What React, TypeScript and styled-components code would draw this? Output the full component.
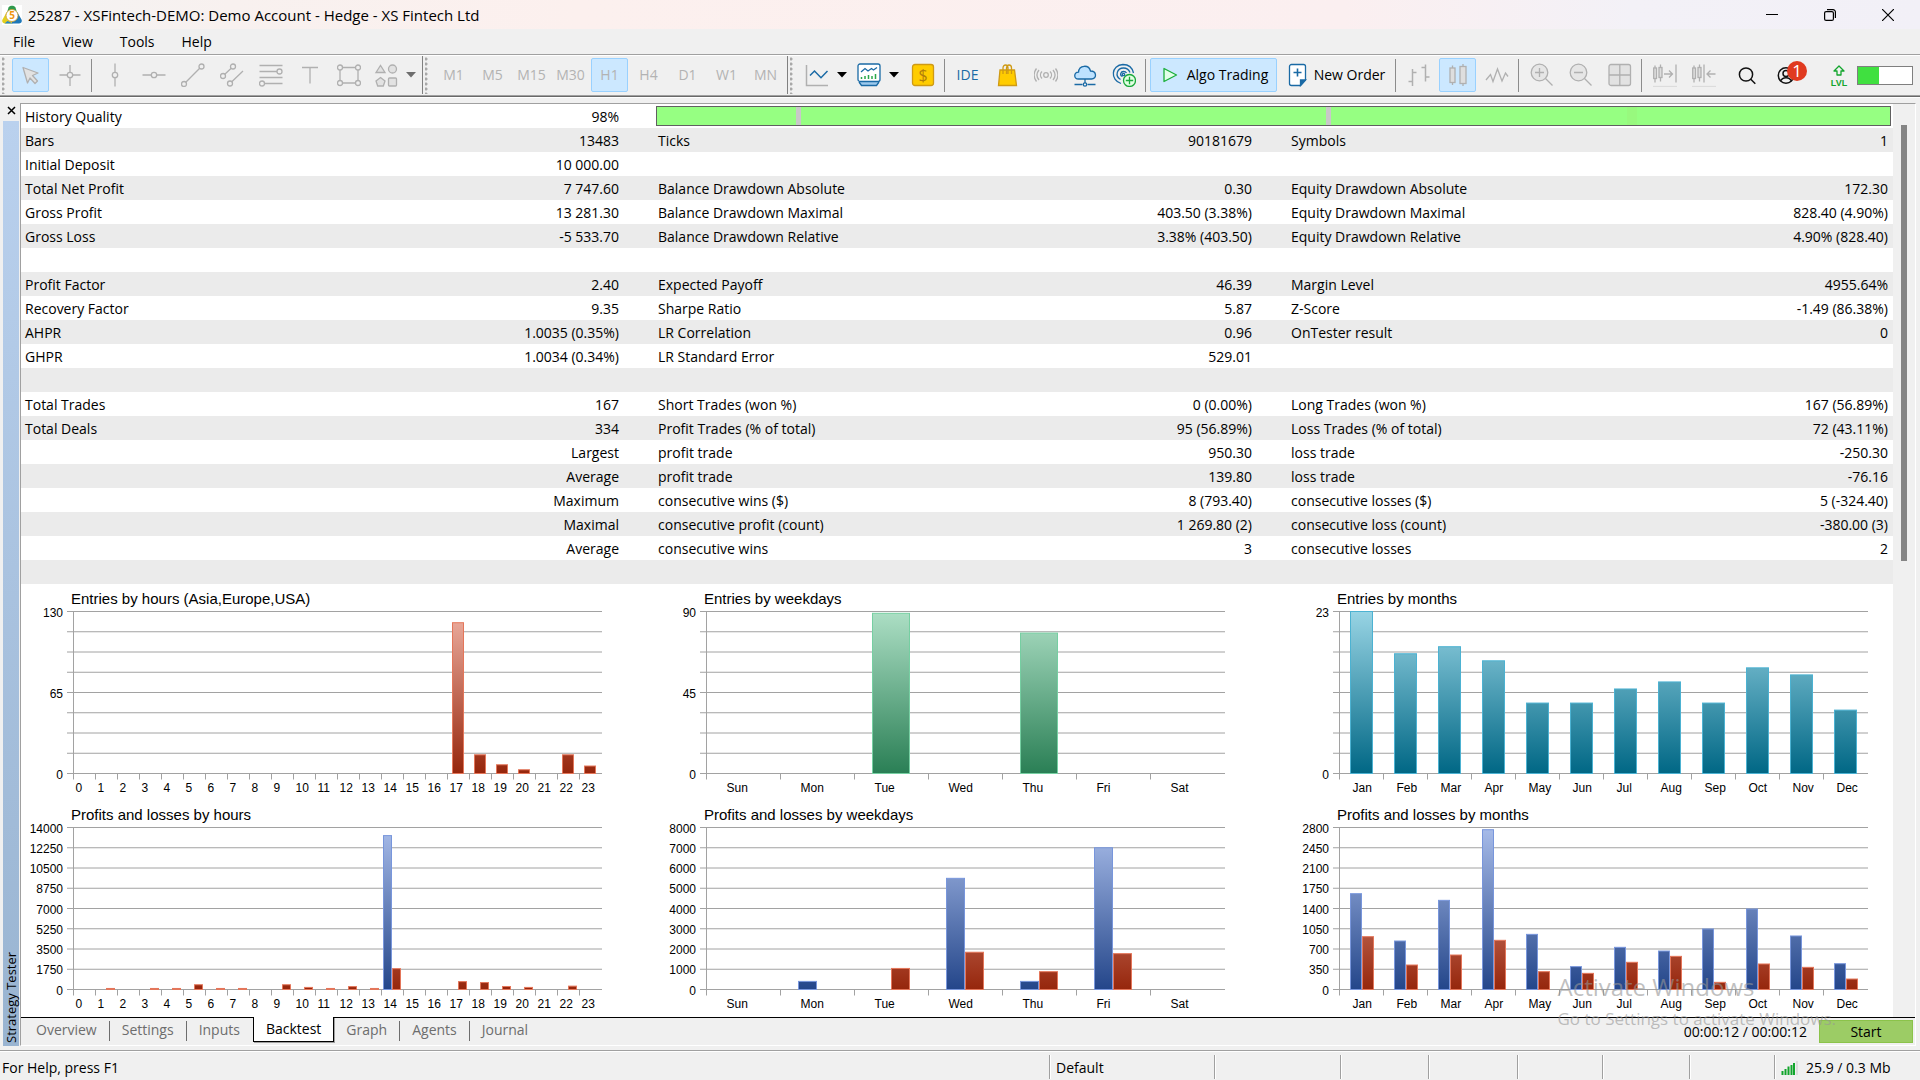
import React, { useState } from "react";
import styled, { createGlobalStyle, css } from "styled-components";

const UI_FONT = `"Open Sans", "Noto Sans", sans-serif`;
const CHART_FONT = `"Liberation Sans", Arial, sans-serif`;

const GlobalStyle = createGlobalStyle`
  *, *::before, *::after { box-sizing: border-box; }
  body {
    margin: 0;
    background: #f0f0f0;
    color: #000;
    font: 14px/20px ${UI_FONT};
  }
  button {
    margin: 0;
    padding: 0;
    border: 0;
    background: none;
    color: inherit;
    font: inherit;
  }
  svg { display: block; }
`;

/* ---------- window frame ---------- */

const Window = styled.div`
  display: flex;
  flex-direction: column;
  min-height: 100vh;
  overflow: hidden;
`;

const TitleBar = styled.header`
  display: flex;
  align-items: center;
  height: 29px;
  padding: 0 3px 0 2px;
  background: linear-gradient(90deg, #f3f3f3 0%, #f8f1ef 12%, #fcf0ee 30%, #fbeff0 70%, #f3f1f7 85%, #f2f0f7 100%);
`;

const WindowTitle = styled.h1`
  flex: 1;
  margin: 0 0 0 6px;
  font-size: 15px;
  font-weight: 400;
`;

const WindowButton = styled.button`
  display: grid;
  place-items: center;
  width: 58px;
  height: 28px;
`;

const MenuBar = styled.nav`
  display: flex;
  gap: 1px;
  height: 25px;
`;

const MenuItem = styled.button`
  padding: 0 13px;
`;

/* ---------- toolbar ---------- */

const Toolbar = styled.div`
  display: flex;
  align-items: stretch;
  height: 44px;
  border-top: 1px solid #a0a0a0;
  border-bottom: 1px solid #fff;
  box-shadow: inset 0 1px #fff, inset 0 -1px #696969, inset 0 -2px #a0a0a0;
  padding: 1px 7px 3px 0;
`;

const ToolGroup = styled.div<{ $end?: number }>`
  display: flex;
  align-items: center;
  gap: 2px;
  ${(p) =>
    p.$end !== undefined &&
    css`
      padding-right: ${p.$end}px;
      border-right: 1px solid #808080;
    `}
`;

const Grip = styled.span`
  align-self: stretch;
  width: 4px;
  margin: 1px 4px 0 2px;
  background: radial-gradient(circle at 1px 2px, #a8a8a8 1px, transparent 2px) 0 0 / 4px 5px repeat-y;
`;

const Divider = styled.span`
  width: 1px;
  height: 33px;
  margin: 0 2px 0 1px;
  background: #8c8c8c;
`;

const ToolButton = styled.button<{ $active?: boolean; $width?: number }>`
  display: flex;
  align-items: center;
  justify-content: center;
  gap: 4px;
  flex: none;
  width: ${(p) => p.$width ?? 37}px;
  height: 34px;
  border: 1px solid ${(p) => (p.$active ? "#99d1ff" : "transparent")};
  border-radius: 2px;
  background: ${(p) => (p.$active ? "#cce8ff" : "transparent")};
  white-space: nowrap;
`;

const PeriodButton = styled(ToolButton)`
  color: #b3b3b3;
`;

const IdeButton = styled(ToolButton)`
  color: #1a6aa5;
`;

const MenuArrow = styled.button<{ $muted?: boolean }>`
  display: grid;
  place-items: center;
  width: 11px;
  height: 34px;
  color: ${(p) => (p.$muted ? "#6d6d6d" : "#000")};
`;

const SplitTool = styled.div<{ $last?: boolean }>`
  display: flex;
  gap: 2px;
  margin-right: ${(p) => (p.$last ? 0 : 3)}px;
`;

const AccountTools = styled(ToolGroup)`
  margin-left: auto;
`;

const AccountButton = styled(ToolButton)`
  position: relative;
  margin-right: 14px;
`;

const Badge = styled.span`
  position: absolute;
  top: 2px;
  right: -4px;
  width: 20px;
  height: 20px;
  border-radius: 50%;
  background: #e03a20;
  color: #fff;
  font-size: 17px;
  line-height: 20px;
  text-align: center;
`;

const LevelMeter = styled.div`
  width: 56px;
  height: 19px;
  margin-left: -2px;
  border: 1px solid #7f7f7f;
  background: #fff;
`;

const LevelFill = styled.div`
  width: 38%;
  height: 100%;
  background: #40e040;
`;

/* ---------- tester panel ---------- */

const Workspace = styled.div`
  display: flex;
  margin: 5px 4px 0 0;
`;

const SideBar = styled.aside`
  display: flex;
  flex-direction: column;
  width: 20px;
  padding: 0 1px 0 3px;
`;

const CloseButton = styled.button`
  display: grid;
  place-items: center;
  height: 14px;
  margin-bottom: 4px;
`;

const SideCaption = styled.div`
  flex: 1;
  display: flex;
  align-items: center;
  padding: 3px 0;
  background: linear-gradient(#99b4d1, #bad1ee);
  font-size: 13px;
  line-height: 16px;
  writing-mode: vertical-rl;
  transform: rotate(180deg);
`;

const Panel = styled.main`
  flex: 1;
  min-width: 0;
  border: 1px solid #a0a0a0;
  border-right-color: #fff;
  border-bottom-color: #fff;
`;

const ReportArea = styled.div`
  display: flex;
`;

const Report = styled.div`
  flex: 1;
  min-width: 0;
  padding-bottom: 1px;
  background: #fff;
`;

const ScrollTrack = styled.div`
  width: 22px;
  padding: 21px 8px;
`;

const ScrollThumb = styled.div`
  width: 6px;
  height: 436px;
  background: #858585;
`;

const StatsBody = styled.div`
  padding: 0 5px 0 4px;
  background: repeating-linear-gradient(#fff 0 24px, #ebebeb 24px 48px);
`;

const StatsTable = styled.table`
  width: 100%;
  border-collapse: collapse;
  table-layout: fixed;
`;

const GapCol = styled.col`
  width: 36px;
`;

const Cell = styled.td<{ $right?: boolean }>`
  height: 24px;
  padding: 2px ${(p) => (p.$right ? 3 : 0)}px 0 0;
  line-height: 20px;
  text-align: ${(p) => (p.$right ? "right" : "left")};
  white-space: nowrap;
  &:last-child { padding-right: 0; }
`;

const HeadCell = styled(Cell).attrs({ as: "th", scope: "row" })`
  font-weight: 400;
`;

const BarCell = styled.td`
  height: 24px;
  padding: 0;
`;

const QualityBar = styled.div`
  display: flex;
  height: 20px;
  margin: 0 -3px 0 -2px;
  border: 1px solid #606060;
  background: #96ff82;
`;

const QualityPart = styled.span<{ $color?: string }>`
  background: ${(p) => p.$color ?? "transparent"};
`;

const Charts = styled.div`
  display: grid;
  grid-template-columns: repeat(3, 1fr);
  column-gap: 27px;
`;

const ChartSvg = styled.svg`
  width: 100%;
  height: auto;
  font-family: ${CHART_FONT};
`;

const TabStrip = styled.div`
  display: flex;
  height: 28px;
  border-top: 1px solid #000;
`;

const Tabs = styled.div`
  display: flex;
  align-items: flex-start;
  padding-left: 3px;
`;

const Tab = styled.button<{ $active: boolean; $divided: boolean }>`
  height: 24px;
  padding: 0 12px;
  color: #6d6d6d;
  ${(p) =>
    p.$active
      ? css`
          margin-top: -1px;
          height: 25px;
          border: solid #000;
          border-width: 0 1px 1px;
          background: #fff;
          color: #000;
          box-shadow: 1px 1px #a0a0a0;
        `
      : css`
          border: solid transparent;
          border-width: 0 1px 0 0;
          background: ${p.$divided ? "linear-gradient(#6d6d6d, #6d6d6d) right 0 top 3px / 1px 20px no-repeat border-box border-box" : "none"};
        `}
`;

const RunInfo = styled.div`
  display: flex;
  align-items: flex-start;
  gap: 12px;
  margin-left: auto;
  padding: 2px 2px 0 0;
`;

const StartButton = styled.button`
  width: 94px;
  height: 23px;
  border: 1px solid #8bc34a;
  background: #9ccc65;
`;

const RunTime = styled.span`
  padding-top: 2px;
`;

const StatusBar = styled.footer`
  display: grid;
  grid-template-columns: 1fr 165px 126px 88px 89px 85px 87px 85px 146px;
  flex: 1;
  margin-top: 4px;
  padding: 4px 0 1px;
  border-top: 1px solid #a0a0a0;
  box-shadow: inset 0 1px #fff;
`;

const StatusCell = styled.div`
  display: flex;
  align-items: center;
  gap: 8px;
  padding: 2px 0 0 2px;
  & + & {
    padding-left: 6px;
    border-left: 1px solid #a0a0a0;
    box-shadow: inset 1px 0 #fff;
  }
`;

const Watermark = styled.div`
  position: absolute;
  right: 84px;
  bottom: 50px;
  color: rgba(150, 150, 150, 0.6);
  font-size: 17px;
  line-height: 22px;
  pointer-events: none;
`;

const WatermarkTitle = styled.div`
  margin-bottom: 4px;
  font-size: 24px;
  line-height: 34px;
`;

/* ---------- icons ---------- */

type IconProps = { children: React.ReactNode; color?: string; size?: number; weight?: number };

const Icon = ({ children, color = "#b0b0b0", size = 24, weight = 1.3 }: IconProps) => (
  <svg width={size} height={size} viewBox="0 0 24 24" fill="none" stroke={color} strokeWidth={weight} aria-hidden="true">
    {children}
  </svg>
);

const ArrowGlyph = () => (
  <svg width="10" height="6" viewBox="0 0 10 6" aria-hidden="true">
    <path d="M0 0h10L5 5.5z" fill="currentColor" />
  </svg>
);

const Logo = () => (
  <svg width="20" height="20" viewBox="0 0 20 20" aria-hidden="true">
    <rect width="20" height="20" fill="#fff" />
    <path d="M4.500 9 6.500 2.600C7.400.2 12.600.2 13.500 2.600L15.500 9z" fill="#2f9a4d" />
    <path d="M4.800 7 .5 14.500C-.5 17 1 18.500 3 18.500h7V10z" fill="#e3cf1c" />
    <path d="M15.200 7l4.300 7.500c1 2.500-.5 4-2.500 4h-7V10z" fill="#1f78b8" />
    <path d="M2.500 18.500l3-2.500 5.500 2.500z" fill="#2a86c8" />
    <circle cx="10" cy="10.500" r="6" fill="#fff" stroke="#cfa13c" strokeWidth=".9" />
    <text x="10" y="14.200" textAnchor="middle" fontSize="10" fontWeight="700" fill="#f0960f" fontFamily={UI_FONT}>5</text>
  </svg>
);

const CursorIcon = () => (
  <Icon><path d="M4 4.500 19 10l-5.500 2.500 5 5.500-2.500 2.500-5-5.500-2.500 5z" fill="#e2e2e2" strokeLinejoin="round" /></Icon>
);
const CrosshairIcon = () => (
  <Icon><circle cx="12" cy="12" r="2.700" /><path d="M1.500 12H9M15 12h7.500M12 2v7M12 15v8" /></Icon>
);
const VLineIcon = () => (
  <Icon><circle cx="12" cy="12" r="2.700" /><path d="M12 .5V9M12 15v8.500" /></Icon>
);
const HLineIcon = () => (
  <Icon><circle cx="12" cy="12" r="2.700" /><path d="M.5 12H9M15 12h8.500" /></Icon>
);
const TrendIcon = () => (
  <Icon><circle cx="3" cy="21" r="2.500" /><circle cx="20.500" cy="3.500" r="2.500" /><path d="M4.800 19.200 18.700 5.300" /></Icon>
);
const ChannelIcon = () => (
  <Icon>
    <circle cx="3" cy="13" r="2.500" /><circle cx="13" cy="3.500" r="2.500" /><circle cx="10" cy="20.500" r="2.500" />
    <path d="M4.800 11.200 11.200 5.300M11.800 18.700 23 8" />
  </Icon>
);
const FiboIcon = () => (
  <Icon>
    <path d="M.5 2.500h23M.5 8.500H18M.5 14.500h23M6 20.500h17.500" />
    <circle cx="20.500" cy="8.500" r="2.500" /><circle cx="3" cy="20.500" r="2.500" />
  </Icon>
);
const LabelIcon = () => (
  <Icon><path d="M4 4.500h16M12 4.500v16" /></Icon>
);
const RectIcon = () => (
  <Icon>
    <circle cx="3" cy="4.500" r="2.500" /><circle cx="21" cy="4.500" r="2.500" />
    <circle cx="3" cy="20" r="2.500" /><circle cx="21" cy="20" r="2.500" />
    <path d="M5.500 4.500h13M5.500 20h13M3 7v10.500M21 7v10.500" />
  </Icon>
);
const ShapesIcon = () => (
  <Icon>
    <path d="M2 9.500 6.500 2.500 11 9.500z" fill="#e2e2e2" />
    <circle cx="18.500" cy="6" r="4" fill="#e2e2e2" />
    <path d="M6.500 14.500l4.500 3.500-1.700 5H3.700L2 18z" fill="#e2e2e2" />
    <rect x="14.500" y="15" width="8" height="8" rx="1" fill="#e2e2e2" />
  </Icon>
);
const LineChartIcon = () => (
  <Icon weight={1.5}><path d="M1.500 2v20.500H23" /><path d="M5 12.500 9.500 8l6.500 6.700L22.500 8" stroke="#1a6aa5" /></Icon>
);
const IndicatorIcon = () => (
  <Icon color="#1a6aa5">
    <path d="M2 19l2.500 3.500h15L22 19" fill="#9cc9ec" />
    <rect x="1" y="1" width="22" height="17.500" rx="2" fill="#fff" />
    <path d="M4 9l4-3.500 3 2.500 3.500-2.500 2 1.500L20 4.500" />
    <path d="M4.500 16v-2M8 16v-3M11.500 16v-4M15 16v-3M18.500 16v-5" stroke="#2aa84a" strokeWidth="1.500" />
  </Icon>
);
const DollarIcon = () => (
  <Icon color="#cf9a14">
    <rect x="1.500" y="1.500" width="21" height="21" rx="2.500" fill="#ffcc00" />
    <text x="12" y="18" textAnchor="middle" fontSize="16" fill="#b07d0c" stroke="none" fontFamily={UI_FONT}>$</text>
  </Icon>
);
const BagIcon = () => (
  <Icon color="#cf9a14">
    <path d="M5 7h14.500l2 15.500h-18z" fill="#ffcc00" />
    <path d="M8 11V5c0-4 5-4 5 0v6M11.500 11V5c0-4 5-4 5 0v6" />
  </Icon>
);
const SignalIcon = () => (
  <Icon>
    <circle cx="12" cy="12" r="2.300" />
    <path d="M8 8.500c-2 2-2 5 0 7M16 8.500c2 2 2 5 0 7M5 7c-2.500 3-2.500 7 0 10M19 7c2.500 3 2.500 7 0 10M2.500 5.500c-3 4-3 9 0 13M21.500 5.500c3 4 3 9 0 13" />
  </Icon>
);
const CloudIcon = () => (
  <Icon color="#1a6aa5">
    <path d="M5.500 16C.5 16 .5 9.500 5.500 9.200 6 1.500 16 1.500 17.500 8c6.500 0 6.500 8 1 8z" fill="#bde2ff" />
    <path d="M12 16v4M1.500 21.500h8M14.500 21.500h8" /><circle cx="12" cy="21.500" r="1.700" />
  </Icon>
);
const VpsIcon = () => (
  <Icon color="#1a6aa5">
    <path d="M9 20.500C-2 17-1 2 11 1.500c6 0 9.500 4 10.500 8.500M8.500 16.500C2.500 13 5 5 11.500 5c3.500 0 5.500 2 6.500 4.500M10.500 13.500C7 12 9 8.500 11.500 8.500c1.500 0 2.500.5 3 1.500" />
    <circle cx="11.500" cy="11.500" r="1.200" />
    <circle cx="17.500" cy="17.500" r="6" fill="#e2ffe2" stroke="#1aa83a" /><path d="M13.800 17.500h7.400M17.500 13.800v7.400" stroke="#1aa83a" />
  </Icon>
);
const PlayIcon = () => (
  <Icon color="#1aae3a"><path d="M5 5.500v13l12.500-6.500z" fill="#e2ffe8" strokeLinejoin="round" /></Icon>
);
const NewOrderIcon = () => (
  <Icon color="#1a6aa5">
    <path d="M5.500 1.500h12a2 2 0 0 1 2 2V17l-5 5.500h-9a2 2 0 0 1-2-2v-17a2 2 0 0 1 2-2z" fill="#fff" />
    <path d="M14.500 22.500V17h5z" fill="#1a6aa5" /><path d="M7.500 9.500h8M11.500 5.500v8" strokeWidth="1.600" />
  </Icon>
);
const BarsIcon = () => (
  <Icon><path d="M5.500 6v17M1.500 18.500h4M5.500 9.500h4M18.500 1.500v17M14.500 4.500h4M18.500 14h4" strokeWidth="1.500" /></Icon>
);
const CandlesIcon = () => (
  <Icon>
    <path d="M6.500 2.500v19.500M17 1v22" />
    <rect x="4" y="5" width="5" height="14.500" fill="#dedede" /><rect x="14" y="3.500" width="6" height="17" fill="#dedede" />
  </Icon>
);
const ZigzagIcon = () => (
  <Icon><path d="M1 17l4.500-5.500L8 18.500 12.500 6l4.500 12 3.500-8 2.500 3.500" /></Icon>
);
const ZoomIcon = ({ plus }: { plus?: boolean }) => (
  <Icon>
    <circle cx="9.500" cy="9.500" r="8.300" fill="#e6e6e6" />
    <path d={`M15.500 15.500l7 7M5 9.500h9${plus ? "M9.500 5v9" : ""}`} />
  </Icon>
);
const TileIcon = () => (
  <Icon><rect x="1" y="1.500" width="21.500" height="21" rx="2" fill="#e2e2e2" /><path d="M1 12h21.500M11.800 1.500v21" /></Icon>
);
const ShiftIcon = ({ back }: { back?: boolean }) => (
  <Icon>
    <path d="M2 2.500v17M7.500 1.500v17" />
    <rect x=".7" y="5" width="2.800" height="10.500" fill="#dedede" /><rect x="6" y="4.500" width="3" height="10" fill="#dedede" />
    <path d={back ? "M12 1.500v18M23.500 11h-8.500M18.500 7.500 15 11l3.500 3.500" : "M23 1.500v18M11 11h8.500M16 7.500l3.500 3.500-3.500 3.500"} />
    <path d="M0 23.500h24" stroke="#dcdcdc" />
  </Icon>
);
const SearchIcon = () => (
  <Icon color="#111" weight={1.5}><circle cx="11" cy="11.500" r="6.600" /><path d="M15.800 16.300l4.500 4.500" /></Icon>
);
const AccountIcon = () => (
  <Icon color="#111" weight={1.5}>
    <circle cx="12" cy="12.500" r="7.700" /><circle cx="12" cy="10.500" r="3" /><path d="M6.500 18c2-4.500 9-4.500 11 0" />
  </Icon>
);
const LevelIcon = () => (
  <Icon color="#12a52c">
    <path d="M12 3 17 8h-3v4h-4V8H7z" strokeLinejoin="round" />
    <text x="12" y="22.500" textAnchor="middle" fontSize="9" fontWeight="700" fill="#12a52c" stroke="none" fontFamily={CHART_FONT}>LVL</text>
  </Icon>
);
const TrafficIcon = () => (
  <svg width="17" height="14" viewBox="0 0 17 14" aria-hidden="true">
    <path d="M1.500 14v-4M4.500 14V8M7.500 14V5.500M10.500 14V4M13 14V2" stroke="#12a52c" strokeWidth="2" />
    <path d="M16 14V0" stroke="#dcdcdc" strokeWidth="2" />
  </svg>
);

/* ---------- statistics ---------- */

type Pair = [string, string];
type StatRow = [Pair, Pair, Pair];

const none: Pair = ["", ""];
const ROWS: StatRow[] = [
  [["Bars", "13483"], ["Ticks", "90181679"], ["Symbols", "1"]],
  [["Initial Deposit", "10 000.00"], none, none],
  [["Total Net Profit", "7 747.60"], ["Balance Drawdown Absolute", "0.30"], ["Equity Drawdown Absolute", "172.30"]],
  [["Gross Profit", "13 281.30"], ["Balance Drawdown Maximal", "403.50 (3.38%)"], ["Equity Drawdown Maximal", "828.40 (4.90%)"]],
  [["Gross Loss", "-5 533.70"], ["Balance Drawdown Relative", "3.38% (403.50)"], ["Equity Drawdown Relative", "4.90% (828.40)"]],
  [none, none, none],
  [["Profit Factor", "2.40"], ["Expected Payoff", "46.39"], ["Margin Level", "4955.64%"]],
  [["Recovery Factor", "9.35"], ["Sharpe Ratio", "5.87"], ["Z-Score", "-1.49 (86.38%)"]],
  [["AHPR", "1.0035 (0.35%)"], ["LR Correlation", "0.96"], ["OnTester result", "0"]],
  [["GHPR", "1.0034 (0.34%)"], ["LR Standard Error", "529.01"], none],
  [none, none, none],
  [["Total Trades", "167"], ["Short Trades (won %)", "0 (0.00%)"], ["Long Trades (won %)", "167 (56.89%)"]],
  [["Total Deals", "334"], ["Profit Trades (% of total)", "95 (56.89%)"], ["Loss Trades (% of total)", "72 (43.11%)"]],
  [["", "Largest"], ["profit trade", "950.30"], ["loss trade", "-250.30"]],
  [["", "Average"], ["profit trade", "139.80"], ["loss trade", "-76.16"]],
  [["", "Maximum"], ["consecutive wins ($)", "8 (793.40)"], ["consecutive losses ($)", "5 (-324.40)"]],
  [["", "Maximal"], ["consecutive profit (count)", "1 269.80 (2)"], ["consecutive loss (count)", "-380.00 (3)"]],
  [["", "Average"], ["consecutive wins", "3"], ["consecutive losses", "2"]],
  [none, none, none],
];

const QUALITY: { grow: number; width: number; color?: string }[] = [
  { grow: 139, width: 0 },
  { grow: 0, width: 5, color: "#c8c8c8" },
  { grow: 525, width: 0 },
  { grow: 0, width: 5, color: "#c8c8c8" },
  { grow: 296, width: 0 },
  { grow: 0, width: 10, color: "#98f97e" },
  { grow: 253, width: 0 },
];

const Statistics = () => (
  <StatsBody>
    <StatsTable>
      <colgroup>
        <col /><col /><GapCol /><col /><col /><GapCol /><col /><col />
      </colgroup>
      <tbody>
        <tr>
          <HeadCell>History Quality</HeadCell>
          <Cell $right>98%</Cell>
          <Cell />
          <BarCell colSpan={5}>
            <QualityBar>
              {QUALITY.map((q, i) => (
                <QualityPart key={i} $color={q.color} style={{ flex: `${q.grow} 0 ${q.width}px` }} />
              ))}
            </QualityBar>
          </BarCell>
        </tr>
        {ROWS.map((row, r) => (
          <tr key={r}>
            {row.map(([label, value], c) => (
              <React.Fragment key={c}>
                {c > 0 && <Cell />}
                {label ? <HeadCell>{label}</HeadCell> : <Cell />}
                <Cell $right>{value}</Cell>
              </React.Fragment>
            ))}
          </tr>
        ))}
      </tbody>
    </StatsTable>
  </StatsBody>
);

/* ---------- charts ---------- */

const PALETTE = {
  red: { top: "#eeb0a2", bottom: "#96260c", edge: "#e4765a" },
  blue: { top: "#a8bce9", bottom: "#24468a", edge: "#7896dc" },
  green: { top: "#addfc5", bottom: "#2a7f55", edge: "#76cfa2" },
  teal: { top: "#98d4e4", bottom: "#006785", edge: "#4cb2d2" },
};
type Hue = keyof typeof PALETTE;

type Series = { hue: Hue; values: number[]; offset: number; width: number };
type ChartData = {
  id: string;
  title: string;
  max: number;
  yTicks: number[];
  labels: string[];
  slot: number;
  labelOffset: number;
  series: Series[];
};

const HOURS = Array.from({ length: 24 }, (_, i) => String(i));
const DAYS = ["Sun", "Mon", "Tue", "Wed", "Thu", "Fri", "Sat"];
const MONTHS = ["Jan", "Feb", "Mar", "Apr", "May", "Jun", "Jul", "Aug", "Sep", "Oct", "Nov", "Dec"];

const steps = (max: number, count: number) => Array.from({ length: count + 1 }, (_, i) => (max / count) * i);
const zeros = (n: number) => Array<number>(n).fill(0);

const CHARTS: ChartData[] = [
  {
    id: "eh", title: "Entries by hours (Asia,Europe,USA)", max: 130, yTicks: steps(130, 2), labels: HOURS, slot: 22, labelOffset: 2,
    series: [{ hue: "red", offset: 5, width: 11, values: [...zeros(17), 121, 15, 7, 3, 0, 15, 6] }],
  },
  {
    id: "ew", title: "Entries by weekdays", max: 90, yTicks: steps(90, 2), labels: DAYS, slot: 74, labelOffset: 20,
    series: [{ hue: "green", offset: 18, width: 37, values: [0, 0, 89, 0, 78, 0, 0] }],
  },
  {
    id: "em", title: "Entries by months", max: 23, yTicks: [0, 23], labels: MONTHS, slot: 44, labelOffset: 13,
    series: [{ hue: "teal", offset: 11, width: 22, values: [23, 17, 18, 16, 10, 10, 12, 13, 10, 15, 14, 9] }],
  },
  {
    id: "ph", title: "Profits and losses by hours", max: 14000, yTicks: steps(14000, 8), labels: HOURS, slot: 22, labelOffset: 2,
    series: [
      { hue: "blue", offset: 2, width: 8, values: [...zeros(14), 13300, ...zeros(9)] },
      { hue: "red", offset: 11, width: 8, values: [0, 90, 0, 90, 90, 410, 90, 90, 0, 410, 180, 90, 250, 90, 1800, 0, 0, 680, 600, 260, 180, 0, 290, 0] },
    ],
  },
  {
    id: "pw", title: "Profits and losses by weekdays", max: 8000, yTicks: steps(8000, 8), labels: DAYS, slot: 74, labelOffset: 20,
    series: [
      { hue: "blue", offset: 18, width: 18, values: [0, 400, 0, 5490, 400, 7000, 0] },
      { hue: "red", offset: 37, width: 18, values: [0, 0, 1040, 1840, 880, 1770, 0] },
    ],
  },
  {
    id: "pm", title: "Profits and losses by months", max: 2800, yTicks: steps(2800, 8), labels: MONTHS, slot: 44, labelOffset: 13,
    series: [
      { hue: "blue", offset: 11, width: 11, values: [1656, 838, 1541, 2762, 953, 395, 729, 665, 1046, 1391, 925, 446] },
      { hue: "red", offset: 23, width: 11, values: [913, 423, 596, 850, 308, 279, 470, 573, 124, 441, 383, 181] },
    ],
  },
];

const AXIS_X = 52.5;
const TOP = 27.5;
const BOTTOM = 189.5;

const Chart = ({ data }: { data: ChartData }) => {
  const y = (v: number) => BOTTOM - (v / data.max) * (BOTTOM - TOP);
  const right = AXIS_X + data.slot * data.labels.length;
  return (
    <ChartSvg viewBox="0 0 606 216" role="img" aria-label={data.title}>
      <defs>
        {data.series.map((s) => (
          <linearGradient key={s.hue} id={`${data.id}-${s.hue}`} gradientUnits="userSpaceOnUse" x1="0" x2="0" y1={TOP} y2={BOTTOM}>
            <stop offset="0" stopColor={PALETTE[s.hue].top} />
            <stop offset="1" stopColor={PALETTE[s.hue].bottom} />
          </linearGradient>
        ))}
      </defs>
      <text x="50" y="20" fontSize="15">{data.title}</text>
      <g stroke="#a2a2a2">
        {steps(data.max, 8).map((v) => (
          <line key={v} x1="46" x2={right + 0.5} y1={y(v)} y2={y(v)} />
        ))}
        <line x1={AXIS_X} x2={AXIS_X} y1={TOP} y2={BOTTOM} />
        {data.labels.map((l, i) => (
          <line key={l} x1={AXIS_X + i * data.slot} x2={AXIS_X + i * data.slot} y1={BOTTOM} y2={BOTTOM + 6} />
        ))}
      </g>
      {data.yTicks.map((v) => (
        <text key={v} x={42} y={y(v) + 5} fontSize="12" textAnchor="end">{v}</text>
      ))}
      {data.labels.map((l, i) => (
        <text key={l} x={AXIS_X + i * data.slot + data.labelOffset} y="208" fontSize="12">{l}</text>
      ))}
      {data.series.map((s) =>
        s.values.map((v, i) =>
          v > 0 ? (
            <rect
              key={`${s.hue}${i}`}
              x={AXIS_X + i * data.slot + s.offset}
              y={y(v)}
              width={s.width}
              height={BOTTOM - y(v)}
              fill={`url(#${data.id}-${s.hue})`}
              stroke={PALETTE[s.hue].edge}
            />
          ) : null
        )
      )}
    </ChartSvg>
  );
};

/* ---------- application ---------- */

const DRAW_TOOLS: [string, () => React.JSX.Element][] = [
  ["Vertical line", VLineIcon],
  ["Horizontal line", HLineIcon],
  ["Trendline", TrendIcon],
  ["Equidistant channel", ChannelIcon],
  ["Fibonacci retracement", FiboIcon],
  ["Text", LabelIcon],
  ["Rectangle", RectIcon],
];
const PERIODS = ["M1", "M5", "M15", "M30", "H1", "H4", "D1", "W1", "MN"];
const TABS = ["Overview", "Settings", "Inputs", "Backtest", "Graph", "Agents", "Journal"];

export default function App() {
  const [tab, setTab] = useState("Backtest");
  const [period, setPeriod] = useState("H1");

  return (
    <Window>
      <GlobalStyle />
      <TitleBar>
        <Logo />
        <WindowTitle>25287 - XSFintech-DEMO: Demo Account - Hedge - XS Fintech Ltd</WindowTitle>
        <WindowButton aria-label="Minimize">
          <svg width="12" height="12"><path d="M0 5.500h12" stroke="#000" /></svg>
        </WindowButton>
        <WindowButton aria-label="Restore">
          <svg width="12" height="12" fill="none" stroke="#000" strokeWidth="1.200">
            <rect x=".6" y="2.600" width="8.800" height="8.800" rx="1.500" />
            <path d="M3 .6h6a2.400 2.400 0 0 1 2.400 2.400v6" />
          </svg>
        </WindowButton>
        <WindowButton aria-label="Close">
          <svg width="12" height="12"><path d="M0 0l12 12M12 0 0 12" stroke="#000" strokeWidth="1.200" /></svg>
        </WindowButton>
      </TitleBar>

      <MenuBar>
        {["File", "View", "Tools", "Help"].map((m) => (
          <MenuItem key={m}>{m}</MenuItem>
        ))}
      </MenuBar>

      <Toolbar role="toolbar">
        <ToolGroup $end={6}>
          <Grip />
          <ToolButton $active aria-label="Cursor"><CursorIcon /></ToolButton>
          <ToolButton aria-label="Crosshair"><CrosshairIcon /></ToolButton>
          <Divider />
          {DRAW_TOOLS.map(([name, Glyph]) => (
            <ToolButton key={name} aria-label={name}><Glyph /></ToolButton>
          ))}
          <SplitTool $last>
            <ToolButton $width={34} aria-label="Shapes"><ShapesIcon /></ToolButton>
            <MenuArrow $muted aria-label="More shapes"><ArrowGlyph /></MenuArrow>
          </SplitTool>
        </ToolGroup>

        <ToolGroup $end={3}>
          <Grip />
          {PERIODS.map((p) => (
            <PeriodButton key={p} $active={p === period} onClick={() => setPeriod(p)}>{p}</PeriodButton>
          ))}
        </ToolGroup>

        <ToolGroup>
          <Grip />
          <SplitTool>
            <ToolButton $width={34} aria-label="Chart type"><LineChartIcon /></ToolButton>
            <MenuArrow aria-label="Chart types"><ArrowGlyph /></MenuArrow>
          </SplitTool>
          <SplitTool>
            <ToolButton $width={34} aria-label="Indicators"><IndicatorIcon /></ToolButton>
            <MenuArrow aria-label="Indicator list"><ArrowGlyph /></MenuArrow>
          </SplitTool>
          <ToolButton aria-label="Trade"><DollarIcon /></ToolButton>
          <Divider />
          <IdeButton>IDE</IdeButton>
          <ToolButton aria-label="Market"><BagIcon /></ToolButton>
          <ToolButton aria-label="Signals"><SignalIcon /></ToolButton>
          <ToolButton aria-label="Cloud"><CloudIcon /></ToolButton>
          <ToolButton aria-label="Virtual hosting"><VpsIcon /></ToolButton>
          <Divider />
          <ToolButton $active $width={127}><PlayIcon />Algo Trading</ToolButton>
          <ToolButton $width={113}><NewOrderIcon />New Order</ToolButton>
          <Divider />
          <ToolButton aria-label="Bar chart"><BarsIcon /></ToolButton>
          <ToolButton $active aria-label="Candlesticks"><CandlesIcon /></ToolButton>
          <ToolButton aria-label="Line chart"><ZigzagIcon /></ToolButton>
          <Divider />
          <ToolButton aria-label="Zoom in"><ZoomIcon plus /></ToolButton>
          <ToolButton aria-label="Zoom out"><ZoomIcon /></ToolButton>
          <ToolButton aria-label="Tile windows"><TileIcon /></ToolButton>
          <Divider />
          <ToolButton aria-label="Auto scroll"><ShiftIcon /></ToolButton>
          <ToolButton aria-label="Chart shift"><ShiftIcon back /></ToolButton>
        </ToolGroup>

        <AccountTools>
          <ToolButton aria-label="Search"><SearchIcon /></ToolButton>
          <AccountButton aria-label="Account"><AccountIcon /><Badge>1</Badge></AccountButton>
          <ToolButton aria-label="Level"><LevelIcon /></ToolButton>
          <LevelMeter><LevelFill /></LevelMeter>
        </AccountTools>
      </Toolbar>

      <Workspace>
        <SideBar>
          <CloseButton aria-label="Close panel">
            <svg width="9" height="9"><path d="M1 1l7 7M8 1 1 8" stroke="#000" strokeWidth="1.500" /></svg>
          </CloseButton>
          <SideCaption>Strategy Tester</SideCaption>
        </SideBar>

        <Panel>
          <ReportArea>
            <Report>
              <Statistics />
              <Charts>
                {CHARTS.map((c) => <Chart key={c.id} data={c} />)}
              </Charts>
            </Report>
            <ScrollTrack><ScrollThumb /></ScrollTrack>
          </ReportArea>

          <TabStrip>
            <Tabs role="tablist">
              {TABS.map((t, i) => (
                <Tab
                  key={t}
                  role="tab"
                  aria-selected={t === tab}
                  $active={t === tab}
                  $divided={i < TABS.length - 1 && TABS[i + 1] !== tab}
                  onClick={() => setTab(t)}
                >
                  {t}
                </Tab>
              ))}
            </Tabs>
            <RunInfo>
              <RunTime>00:00:12 / 00:00:12</RunTime>
              <StartButton>Start</StartButton>
            </RunInfo>
          </TabStrip>
        </Panel>
      </Workspace>

      <StatusBar>
        <StatusCell>For Help, press F1</StatusCell>
        <StatusCell>Default</StatusCell>
        {Array.from({ length: 6 }, (_, i) => <StatusCell key={i} />)}
        <StatusCell><TrafficIcon />25.9 / 0.3 Mb</StatusCell>
      </StatusBar>

      <Watermark>
        <WatermarkTitle>Activate Windows</WatermarkTitle>
        Go to Settings to activate Windows.
      </Watermark>
    </Window>
  );
}
